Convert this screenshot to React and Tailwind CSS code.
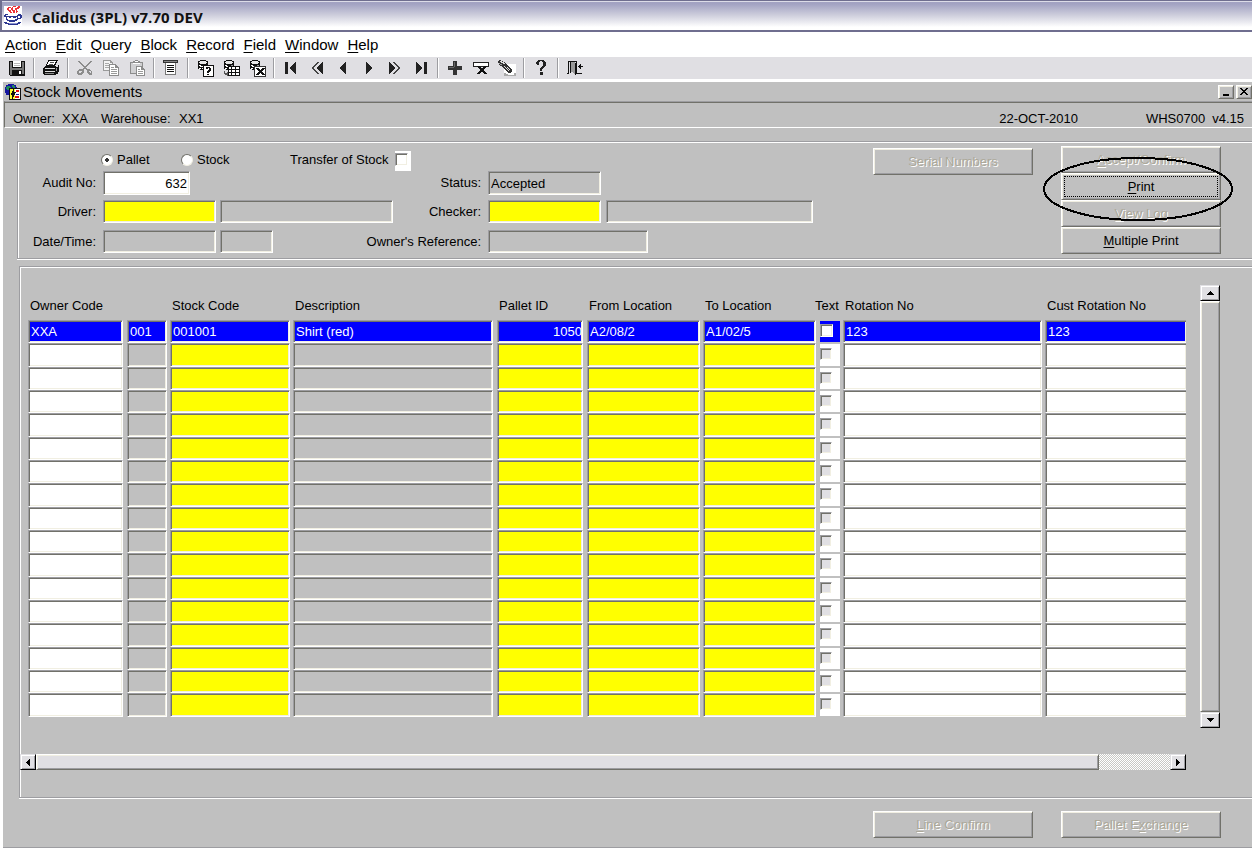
import React, { useState } from "react";

const SUNKEN =
  "border border-t-[#9d9da1] border-l-[#9d9da1] border-r-white border-b-white shadow-[inset_1px_1px_0_#71716a,inset_-1px_-1px_0_#f1efe2]";
const RAISED =
  "border border-t-white border-l-white border-r-[#71716a] border-b-[#71716a] shadow-[inset_1px_1px_0_#f1efe2,inset_-1px_-1px_0_#9d9da1]";
const ARROW =
  "flex shrink-0 items-center justify-center bg-[#e0dfe3] border border-t-[#e0dfe3] border-l-[#e0dfe3] border-r-black border-b-black shadow-[inset_1px_1px_0_#fff,inset_-1px_-1px_0_#9d9da1]";

const MENUS = ["Action", "Edit", "Query", "Block", "Record", "Field", "Window", "Help"];

const COLUMNS = [
  { key: "owner", title: "Owner Code", col: "w-[99px]", pad: "pr-1", bg: "bg-white" },
  { key: "seq", title: "", col: "w-[43px]", pad: "pr-[3px]", bg: "bg-[#c0c0c0]" },
  { key: "stock", title: "Stock Code", col: "w-[123px]", pad: "pr-[3px]", bg: "bg-[#ffff00]" },
  { key: "desc", title: "Description", col: "w-[204px]", pad: "pr-1", bg: "bg-[#c0c0c0]" },
  { key: "pallet", title: "Pallet ID", col: "w-[90px]", pad: "pr-1", bg: "bg-[#ffff00]", align: "text-right" },
  { key: "from", title: "From Location", col: "w-[116px]", pad: "pr-[3px]", bg: "bg-[#ffff00]" },
  { key: "to", title: "To Location", col: "w-[117px]", pad: "pr-1", bg: "bg-[#ffff00]" },
  { key: "text", title: "Text", col: "w-[23px]", pad: "pr-[3px]", check: true },
  { key: "rotation", title: "Rotation No", col: "w-[202px]", pad: "pr-[3px]", bg: "bg-white" },
  { key: "cust", title: "Cust Rotation No", col: "", pad: "", bg: "bg-white", open: true },
];

const FIRST_ROW = {
  owner: "XXA",
  seq: "001",
  stock: "001001",
  desc: "Shirt (red)",
  pallet: "1050",
  from: "A2/08/2",
  to: "A1/02/5",
  rotation: "123",
  cust: "123",
};

const ROWS = [FIRST_ROW, ...Array.from({ length: 16 }, () => ({}))];

const Svg = ({ w = 16, h = 16, children }) => (
  <svg width={w} height={h} viewBox={`0 0 ${w} ${h}`} shapeRendering="crispEdges" aria-hidden="true">
    {children}
  </svg>
);

const Database = () => (
  <>
    <path d="M3 0h6v1h2v8h-2v1H3V9H1V1h2z" fill="#111" />
    <path d="M3 1h6v1h1v1H9v1H3V3H2V2h1z" fill="#e8e8e8" />
    <path d="M2 5h2v1h4V5h2v1H9v1H3V6H2zM2 8h2v1H2zM5 8h3v1H5z" fill="#fff" />
    <path d="M8 5h2v1H8zM8 8h2v1H8z" fill="#999" />
  </>
);

const ICONS = {
  save: (
    <Svg>
      <path d="M0 1h16v15H1v-1H0z" fill="#111" />
      <path d="M1 2h2v13H1zM13 2h2v12h-2zM3 8h10v2H3z" fill="#777" />
      <path d="M4 1h8v6H4z" fill="#fff" />
      <path d="M5 3h6v1H5zM5 5h6v1H5z" fill="#bbb" />
      <path d="M4 10h9v5H4z" fill="#111" />
      <path d="M10 11h2v3h-2z" fill="#fff" />
    </Svg>
  ),
  print: (
    <Svg>
      <path d="M5 0h10v1h-1v2h-1v2h-1v1H3V4h1V2h1z" fill="#111" />
      <path d="M6 1h7v1h-1v2h-1v1H4V4h1V2h1z" fill="#fff" />
      <path d="M7 2h4v1H7zM6 4h4v1H6z" fill="#555" />
      <path d="M2 6h11v1h2V5h1v7h-1v2h-2v1H1v-1H0V8h1V7h1z" fill="#111" />
      <path d="M2 8h10v1H2zM2 11h10v1H2z" fill="#ddd" />
      <path d="M2 13h9v1H2z" fill="#888" />
      <path d="M13 8h1v3h-1z" fill="#999" />
    </Svg>
  ),
  cut: (
    <Svg>
      <path d="M1 1h2v1h1v1h1v1h1v1h1v1h1v1h1v1h1v2H9V9H8V8H7V7H6V6H5V5H4V4H3V3H2V2H1zM15 1v1h-1v1h-1v1h-1v1h-1v1h-1v1H9v1H8v1H7v1H6V8h1V7h1V6h1V5h1V4h1V3h1V2h1V1z" fill="#8c8c8c" />
      <path d="M2 9h4v1h1v3H6v1H5v1H1v-1H0v-3h1v-1h1zM2 11v2h2v-1h1v-1zM10 9h3v1h1v1h1v4h-3v-1h-1v-1h-1zM12 11v1h1v1h1v-2z" fill="#8c8c8c" fillRule="evenodd" />
    </Svg>
  ),
  copy: (
    <Svg>
      <path d="M0 0h8v1h1v1h1v9H0z" fill="#9a9a9a" />
      <path d="M1 1h6v2h2v7H1z" fill="#f4f4f4" />
      <path d="M2 3h4v1H2zM2 5h5v1H2zM2 7h5v1H2z" fill="#aaa" />
      <path d="M6 4h7v1h1v1h1v1h1v9H6z" fill="#8c8c8c" />
      <path d="M7 5h5v3h3v7H7z" fill="#fff" />
      <path d="M8 7h3v1H8zM8 9h6v1H8zM8 11h6v1H8zM8 13h6v1H8z" fill="#999" />
    </Svg>
  ),
  paste: (
    <Svg>
      <path d="M1 2h3V1h2V0h3v1h2v1h3v12H1z" fill="#8c8c8c" />
      <path d="M2 3h11v10H2z" fill="#d0d0d2" />
      <path d="M4 3h7v1H4zM6 1h3v1H6z" fill="#fff" />
      <path d="M7 6h6v1h1v1h1v1h1v7H7z" fill="#8c8c8c" />
      <path d="M8 7h4v3h3v5H8z" fill="#fff" />
      <path d="M9 9h2v1H9zM9 11h5v1H9zM9 13h5v1H9z" fill="#999" />
    </Svg>
  ),
  list: (
    <Svg>
      <path d="M0 0h15v3H0z" fill="#333" />
      <path d="M1 1h13v1H1z" fill="#888" />
      <path d="M2 3h11v12H2z" fill="#777" />
      <path d="M3 3h9v11H3z" fill="#fff" />
      <path d="M4 5h7v1H4zM4 7h7v1H4zM4 9h7v1H4zM4 11h7v1H4z" fill="#111" />
    </Svg>
  ),
  enterQuery: (
    <Svg w={17} h={17}>
      <Database />
      <path d="M6 5h11v12H6z" fill="#111" />
      <path d="M7 6h9v10H7z" fill="#fff" />
      <path d="M9 7h4v1h1v3h-1v1h-1v1h-2v-2h1v-1h1V8h-1v1H9zM10 14h2v1h-2z" fill="#111" />
    </Svg>
  ),
  executeQuery: (
    <Svg w={17} h={17}>
      <Database />
      <path d="M5 6h12v10H5z" fill="#111" />
      <path d="M6 7h2v2H6zM9 7h3v2H9zM13 7h3v2h-3zM6 10h2v2H6zM9 10h3v2H9zM13 10h3v2h-3zM6 13h2v2H6zM9 13h3v2H9zM13 13h3v2h-3z" fill="#fff" />
      <path d="M1 11h1v2h2v-1h1v4H4v-1H2v-1H1z" fill="#555" />
    </Svg>
  ),
  cancelQuery: (
    <Svg w={17} h={17}>
      <Database />
      <path d="M5 6h12v11H5z" fill="#333" />
      <path d="M6 7h10v9H6z" fill="#fff" />
      <path d="M7 8h3v1h1v1h1V9h1V8h3v1h-1v1h-1v1h-1v1h1v1h1v1h1v1h-3v-1h-1v-1h-1v1h-1v1H7v-1h1v-1h1v-1h1v-1H9v-1H8V9H7z" fill="#111" />
    </Svg>
  ),
  first: (
    <Svg w={12} h={12}>
      <path d="M0 0h3v12H0zM11 0v12h-1v-1H9v-1H8V9H7V8H6V7H5V5h1V4h1V3h1V2h1V1h1V0z" fill="#222" />
    </Svg>
  ),
  fastBack: (
    <Svg w={12} h={12}>
      <path d="M12 0v12h-1v-1h-1v-1H9V9H8V8H7V7H6V5h1V4h1V3h1V2h1V1h1V0z" fill="#222" />
      <path d="M8 0v1H7v1H6v1H5v1H4v1H3v2h1v1h1v1h1v1h1v1h1v1H6v-1H5v-1H4V9H3V8H2V7H1V5h1V4h1V3h1V2h1V1h1V0z" fill="#444" />
    </Svg>
  ),
  back: (
    <Svg w={8} h={12}>
      <path d="M7 0v12H6v-1H5v-1H4V9H3V8H2V7H1V5h1V4h1V3h1V2h1V1h1V0z" fill="#222" />
    </Svg>
  ),
  forward: (
    <Svg w={8} h={12}>
      <path d="M1 0v12h1v-1h1v-1h1V9h1V8h1V7h1V5H6V4H5V3H4V2H3V1H2V0z" fill="#222" />
    </Svg>
  ),
  fastForward: (
    <Svg w={12} h={12}>
      <path d="M0 0v12h1v-1h1v-1h1V9h1V8h1V7h1V5H5V4H4V3H3V2H2V1H1V0z" fill="#222" />
      <path d="M4 0v1h1v1h1v1h1v1h1v1h1v2H8v1H7v1H6v1H5v1H4v1h2v-1h1v-1h1V9h1V8h1V7h1V5h-1V4H9V3H8V2H7V1H6V0z" fill="#444" />
    </Svg>
  ),
  last: (
    <Svg w={12} h={12}>
      <path d="M12 0H9v12h3zM1 0v12h1v-1h1v-1h1V9h1V8h1V7h1V5H6V4H5V3H4V2H3V1H2V0z" fill="#222" />
    </Svg>
  ),
  insert: (
    <Svg w={14} h={14}>
      <path d="M5 0h4v5h5v4H9v5H5V9H0V5h5z" fill="#333" />
      <path d="M6 1h1v5H6zM1 6h5v1H1z" fill="#666" />
    </Svg>
  ),
  remove: (
    <Svg w={16} h={14}>
      <path d="M0 1h16v5H0z" fill="#222" />
      <path d="M1 2h14v3H1z" fill="#fff" />
      <path d="M4 5h3v1h1v1h2V6h1V5h3v1h-1v1h-1v1h-1v2h1v1h1v1h1v1h-3v-1h-1v-1H8v1H7v1H4v-1h1v-1h1v-1h1V8H6V7H5V6H4z" fill="#111" />
    </Svg>
  ),
  clear: (
    <Svg w={18} h={16}>
      <path d="M6 4h12v11H6z" fill="#fff" />
      <path d="M6 13h2v1h2v1h6v-2h2v3H6z" fill="#aaa" />
      <path d="M1 0h2v1h2v1h2v1h1v1h1v1h1v1h1v1h1v1h1v1h1v3h-1v1h-3v-1H9v-1H8v-1H7V9H6V8H5V7H4V6H2V5H1V3H0V1h1z" fill="#333" />
      <path d="M2 1h2v1h2v1h1v1H5V3H3V2H2zM6 6h1v1h1v1h1v1h1v1h1v1h-1v-1H9V9H8V8H7V7H6zM9 7h1v1h1v1h1v1h-1V9h-1V8H9z" fill="#ddd" />
      <path d="M1 3h1v1h2v1H2V4H1z" fill="#999" />
    </Svg>
  ),
  help: (
    <Svg w={10} h={16}>
      <path d="M2 0h6v1h1v1h1v4H9v1H8v1H7v1H6v2H4V8h1V7h1V6h1V2H6V1H4v1H3v3H1V4H0V2h1V1h1zM4 12h3v3H4z" fill="#222" />
    </Svg>
  ),
  exit: (
    <Svg w={16} h={14}>
      <path d="M1 0h9v13H9V1H2v12H0v-1h1zM10 12h5v1h-5z" fill="#111" />
      <path d="M3 1h5v2h1v11H8v-1H7v-1H6v-1H3z" fill="#999" />
      <path d="M3 1h1v11H3zM8 2h1v12H8z" fill="#111" />
      <path d="M13 3h1v2h2v1h-2v2h-1V7h-1V6h-1V5h1V4h1z" fill="#111" />
    </Svg>
  ),
};

const TOOLBAR = [
  [["save", "Save"]],
  [["print", "Print"]],
  [["cut", "Cut"], ["copy", "Copy"], ["paste", "Paste"]],
  [["list", "List of values"]],
  [["enterQuery", "Enter query"], ["executeQuery", "Execute query"], ["cancelQuery", "Cancel query"]],
  [
    ["first", "First record"],
    ["fastBack", "Previous block"],
    ["back", "Previous record"],
    ["forward", "Next record"],
    ["fastForward", "Next block"],
    ["last", "Last record"],
  ],
  [["insert", "Insert record"], ["remove", "Delete record"], ["clear", "Clear record"]],
  [["help", "Help"]],
  [["exit", "Exit"]],
];

const JavaIcon = () => (
  <Svg w={18} h={20}>
    <path d="M0 0h18v20H0z" fill="#fff" />
    <path
      d="M4 1h3v1H4zM9 0h3v1H9zM14 0h2v2h-1v1h-2V1h1zM3 2h2v2h2v1H4V4H3zM8 1h1v3h2v1H8V4H7V2h1zM11 2h2v3h-1V4h-1zM5 5h2v1h1v1H6V6H5zM9 5h2v2H9zM12 5h2v1h-1v1h-1z"
      fill="#ee3338"
    />
    <path
      d="M0 9h1V8h3v1H2v1h11V9h1V8h3v1h1v3h-1v1h-3v1h-1v1h-2v1H5v-1H3v-1H2v-3H0zM3 11v2h1v1h7v-1h2v-2zM14 10v2h2v-2z"
      fill="#2b3590"
      fillRule="evenodd"
    />
    <path d="M5 11h2v1H5zM9 11h3v1H9z" fill="#2b3590" />
    <path d="M0 16h3v1h11v-1h3v1h-1v1h-2v1H4v-1H1v-1H0z" fill="#2b3590" />
    <path d="M5 17h8v1H5z" fill="#8d94cf" />
  </Svg>
);

const FormIcon = () => (
  <Svg w={16} h={16}>
    <path d="M3 0h6v1h2v2h1v6h-1v2H1V9H0V3h1V1h2z" fill="#1414a0" />
    <path d="M2 2h3v1h1v2H4v1H2V5H1V3h1zM7 1h2v1h1v2H8z" fill="#1f8a5a" />
    <path d="M4 4h12v12H4z" fill="#111" />
    <path d="M5 5h10v10H5z" fill="#fff" />
    <path d="M5 5h5v10H5z" fill="#ffff30" />
    <path d="M8 5h1v3h2v1h-1v2H9v2H8v2H7v-4H6V9h1V7h1z" fill="#111" />
    <path d="M11 6h3v2h-3z" fill="#e01010" />
    <path d="M11 10h3v1h-3z" fill="#1414a0" />
    <path d="M10 12h4v2h-4z" fill="#e01010" />
  </Svg>
);

const Toolbar = () => (
  <div role="toolbar" className="flex h-[22px] items-center overflow-hidden bg-[#e0dfe3] pl-1">
    {TOOLBAR.map((group, i) => (
      <React.Fragment key={i}>
        {i > 0 && <span className="mx-[3px] h-5 w-0.5 shrink-0 border-l border-l-[#9d9da1] bg-white" />}
        {group.map(([name, label]) => (
          <button
            key={name}
            type="button"
            aria-label={label}
            className="flex h-5 w-[26px] shrink-0 items-center justify-center"
          >
            {ICONS[name]}
          </button>
        ))}
      </React.Fragment>
    ))}
  </div>
);

const Field = ({ label, className, yellow, white, ...rest }) => (
  <input
    type="text"
    aria-label={label}
    className={`${SUNKEN} ${className} ${
      yellow ? "bg-[#ffff00]" : white ? "bg-white" : "bg-[#c0c0c0]"
    } rounded-none px-0.5 text-[13px] leading-4 outline-none`}
    {...rest}
  />
);

// hotkey is the underlined letter, index into the label
const PushButton = ({ label, hotkey = -1, disabled, focused }) => (
  <button
    type="button"
    disabled={disabled}
    className={`${RAISED} relative h-[27px] w-40 bg-[#c0c0c0] text-center text-[13px] leading-4 ${
      disabled ? "text-[#aca899] [text-shadow:1px_1px_0_#fff]" : "text-black"
    }`}
  >
    {focused && <span className="absolute inset-0.5 border border-dotted border-black" />}
    {hotkey < 0 ? (
      label
    ) : (
      <>
        {label.slice(0, hotkey)}
        <span className="underline underline-offset-2">{label[hotkey]}</span>
        {label.slice(hotkey + 1)}
      </>
    )}
  </button>
);

const RADIO =
  "size-3 appearance-none rounded-full bg-white border border-t-[#71716a] border-l-[#71716a] border-r-[#f1efe2] border-b-[#f1efe2] checked:bg-[radial-gradient(circle,#333_0_2px,#fff_2px)]";

const Header = () => {
  const [kind, setKind] = useState("pallet");
  const [audit, setAudit] = useState("632");

  return (
    <section className="ml-[13px] mt-[13px] flex border-y border-l border-[#9d9da1] shadow-[inset_1px_1px_0_#fff,0_1px_0_#fff]">
      <div className="pb-[5px] pt-[9px] pl-px">
        <div className="flex h-5 pl-[82px]">
          <label className="flex h-[18px] w-20 items-center gap-1">
            <input type="radio" name="kind" className={RADIO} checked={kind === "pallet"} onChange={() => setKind("pallet")} />
            Pallet
          </label>
          <label className="flex h-[18px] w-[109px] items-center gap-1">
            <input type="radio" name="kind" className={RADIO} checked={kind === "stock"} onChange={() => setKind("stock")} />
            Stock
          </label>
          <label className="flex h-5 gap-1.5">
            <span className="leading-[18px]">Transfer of Stock</span>
            <span className="flex h-5 w-4 items-start bg-white pt-0.5">
              <input type="checkbox" className={`${SUNKEN} size-[13px] appearance-none bg-white checked:bg-black`} />
            </span>
          </label>
        </div>

        <div className="flex">
          <div className="flex w-[469px] items-center">
            <label htmlFor="audit" className="w-[84px] pr-[7px] text-right">Audit No:</label>
            <Field id="audit" white className="h-6 w-[87px] text-right" value={audit} onChange={(e) => setAudit(e.target.value)} />
            <label htmlFor="status" className="ml-auto pr-[7px]">Status:</label>
          </div>
          <Field id="status" className="h-6 w-[113px]" value="Accepted" readOnly />
        </div>

        <div className="mt-[5px] flex">
          <div className="flex w-[469px] items-center">
            <label htmlFor="driver" className="w-[84px] pr-[7px] text-right">Driver:</label>
            <Field id="driver" yellow className="h-[23px] w-[113px]" />
            <Field label="Driver name" className="ml-1 h-[23px] w-[173px]" readOnly />
            <label htmlFor="checker" className="ml-auto pr-[7px]">Checker:</label>
          </div>
          <Field id="checker" yellow className="h-[23px] w-[113px]" />
          <Field label="Checker name" className="ml-[5px] h-[23px] w-[207px]" readOnly />
        </div>

        <div className="mt-[7px] flex">
          <div className="flex w-[469px] items-center">
            <label htmlFor="date" className="w-[84px] pr-[7px] text-right">Date/Time:</label>
            <Field id="date" className="h-[23px] w-[113px]" readOnly />
            <Field label="Time" className="ml-1 h-[23px] w-[53px]" readOnly />
            <label htmlFor="reference" className="ml-auto pr-[7px]">Owner's Reference:</label>
          </div>
          <Field id="reference" className="h-[23px] w-40" readOnly />
        </div>
      </div>

      <div className="ml-auto flex gap-7 pr-[31px]">
        <div className="pt-1.5">
          <PushButton label="Serial Numbers" disabled />
        </div>
        <div className="relative flex flex-col pt-1">
          <PushButton label="Accept/Confirm" hotkey={0} disabled />
          <PushButton label="Print" hotkey={0} focused />
          <PushButton label="View Log" hotkey={0} disabled />
          <PushButton label="Multiple Print" hotkey={0} />
          <svg
            className="pointer-events-none absolute -left-[18px] top-3.5"
            width="192"
            height="66"
            viewBox="0 0 192 66"
            shapeRendering="crispEdges"
            aria-hidden="true"
          >
            <ellipse cx="95" cy="33" rx="94" ry="31" fill="none" stroke="#000" strokeWidth="2" />
          </svg>
        </div>
      </div>
    </section>
  );
};

const Cell = ({ column, row, index }) => {
  const selected = index === 0;
  if (column.check) {
    return (
      <div className="h-full py-px">
        <div className={`flex h-full items-center ${selected ? "bg-[#0000ff]" : "bg-white"}`}>
          <input
            type="checkbox"
            aria-label={`Text, row ${index + 1}`}
            className={`${SUNKEN} mb-0.5 appearance-none ${
              selected ? "size-[13px] bg-white" : "size-3 bg-[#e0dfe3]"
            } checked:bg-black`}
          />
        </div>
      </div>
    );
  }
  return (
    <input
      type="text"
      aria-label={`${column.title || "Sequence"}, row ${index + 1}`}
      defaultValue={row[column.key] || ""}
      className={`${SUNKEN} block h-full w-full rounded-none text-[13px] leading-4 outline-none ${
        column.align ? "text-right" : "pl-0.5"
      } ${column.open ? "border-r-0" : ""} ${selected ? "bg-[#0000ff] text-white" : column.bg}`}
    />
  );
};

const Lines = () => (
  <section className="ml-[15px] mt-[7px] border-y border-l border-[#9d9da1] shadow-[inset_1px_1px_0_#fff,0_1px_0_#fff]">
    <div className="flex pr-8">
      <div className="min-w-0 flex-1 pb-[11px] pl-2 pt-[29px]">
        <table className="w-full table-fixed border-collapse">
          <colgroup>
            {COLUMNS.map((c) => (
              <col key={c.key} className={c.col} />
            ))}
          </colgroup>
          <thead>
            <tr className="h-6">
              {COLUMNS.map((c) => (
                <th key={c.key} scope="col" className="p-0 text-left align-top font-normal leading-5 whitespace-nowrap">
                  <div className={c.check ? "-ml-[5px]" : "pl-0.5"}>{c.title}</div>
                </th>
              ))}
            </tr>
          </thead>
          <tbody>
            {ROWS.map((row, i) => (
              <tr key={i} className={i % 3 === 1 ? "h-6" : "h-[23px]"}>
                {COLUMNS.map((c) => (
                  <td key={c.key} className={`h-[inherit] p-0 ${c.pad}`}>
                    <Cell column={c} row={row} index={i} />
                  </td>
                ))}
              </tr>
            ))}
          </tbody>
        </table>
      </div>
      <div className="ml-3.5 mt-[18px] flex w-5 flex-col">
        <button type="button" aria-label="Scroll up" className={`${ARROW} h-4 w-5`}>
          <Svg w={7} h={4}>
            <path d="M3 0h1v1h1v1h1v1h1v1H0V3h1V2h1V1h1z" />
          </Svg>
        </button>
        <div className={`${RAISED} flex-1`} />
        <button type="button" aria-label="Scroll down" className={`${ARROW} h-4 w-5`}>
          <Svg w={7} h={4}>
            <path d="M0 0h7v1H6v1H5v1H4v1H3V3H2V2H1V1H0z" />
          </Svg>
        </button>
      </div>
    </div>

    <div className="mb-[27px] mr-[66px] mt-[26px] flex h-4">
      <button type="button" aria-label="Scroll left" className={`${ARROW} w-4`}>
        <Svg w={4} h={7}>
          <path d="M4 0v7H3V6H2V5H1V4H0V3h1V2h1V1h1V0z" />
        </Svg>
      </button>
      <div className={`${RAISED} flex-1 bg-[#e0dfe3]`} />
      <div className="w-[71px] bg-[repeating-conic-gradient(#fff_0_25%,#c8c8c4_0_50%)] bg-[length:2px_2px]" />
      <button type="button" aria-label="Scroll right" className={`${ARROW} w-4`}>
        <Svg w={4} h={7}>
          <path d="M0 0v7h1V6h1V5h1V4h1V3H3V2H2V1H1V0z" />
        </Svg>
      </button>
    </div>
  </section>
);

const App = () => {
  return (
    <div className="min-h-screen overflow-hidden bg-white font-['Liberation_Sans',Arial,sans-serif] text-[13px] leading-4 text-black">
      <header className="flex h-8 items-center gap-2.5 border-b-2 border-l-2 border-t border-[#6f6e8f] bg-linear-to-b from-[#a2a2c2] from-10% via-[#cfcfdd] via-50% to-white to-90% pl-0.5 shadow-[inset_0_1px_0_#dcdce8]">
        <JavaIcon />
        <h1 className="pt-0.5 font-['Open_Sans',sans-serif] text-[15px] font-bold text-[#111]">Calidus (3PL) v7.70 DEV</h1>
      </header>

      <nav className="flex h-[25px] items-center gap-[9px] pl-[5px] text-[15px]">
        {MENUS.map((m) => (
          <button key={m} type="button">
            <span className="underline underline-offset-2">{m[0]}</span>
            {m.slice(1)}
          </button>
        ))}
      </nav>

      <Toolbar />

      <main className="ml-[3px] mt-[3px] border-b border-[#9d9da1] bg-[#c0c0c0]">
        <div className="flex h-[19px] items-center gap-0.5 pl-0.5">
          <FormIcon />
          <h2 className="text-[15px]">Stock Movements</h2>
          <div className="ml-auto flex gap-0.5">
            <button type="button" aria-label="Minimize" className={`${RAISED} flex h-3.5 w-4 items-end justify-center pb-0.5`}>
              <Svg w={6} h={2}>
                <path d="M0 0h6v2H0z" />
              </Svg>
            </button>
            <button type="button" aria-label="Close" className={`${RAISED} flex h-3.5 w-4 items-center justify-center`}>
              <Svg w={8} h={7}>
                <path d="M0 0h2v1h1v1h2V1h1V0h2v1H7v1H6v1H5v1h1v1h1v1h1v1H6V6H5V5H3v1H2v1H0V6h1V5h1V4h1V3H2V2H1V1H0z" />
              </Svg>
            </button>
          </div>
        </div>

        <div className="ml-px">
          <div className="flex h-[27px] items-center border-b border-l border-t border-b-white border-l-[#71716a] border-t-[#9d9da1] pl-2 pr-2 pt-2 shadow-[inset_0_1px_0_#71716a]">
            <span className="w-[49px]">Owner:</span>
            <span className="w-[39px]">XXA</span>
            <span className="w-[78px]">Warehouse:</span>
            <span>XX1</span>
            <span className="ml-auto">22-OCT-2010</span>
            <span className="ml-[68px]">WHS0700</span>
            <span className="ml-[7px]">v4.15</span>
          </div>

          <Header />
          <Lines />

          <div className="flex justify-end gap-7 pb-[9px] pr-[31px] pt-[13px]">
            <PushButton label="Line Confirm" hotkey={0} disabled />
            <PushButton label="Pallet Exchange" hotkey={8} disabled />
          </div>
        </div>
      </main>
    </div>
  );
};

export default App;
